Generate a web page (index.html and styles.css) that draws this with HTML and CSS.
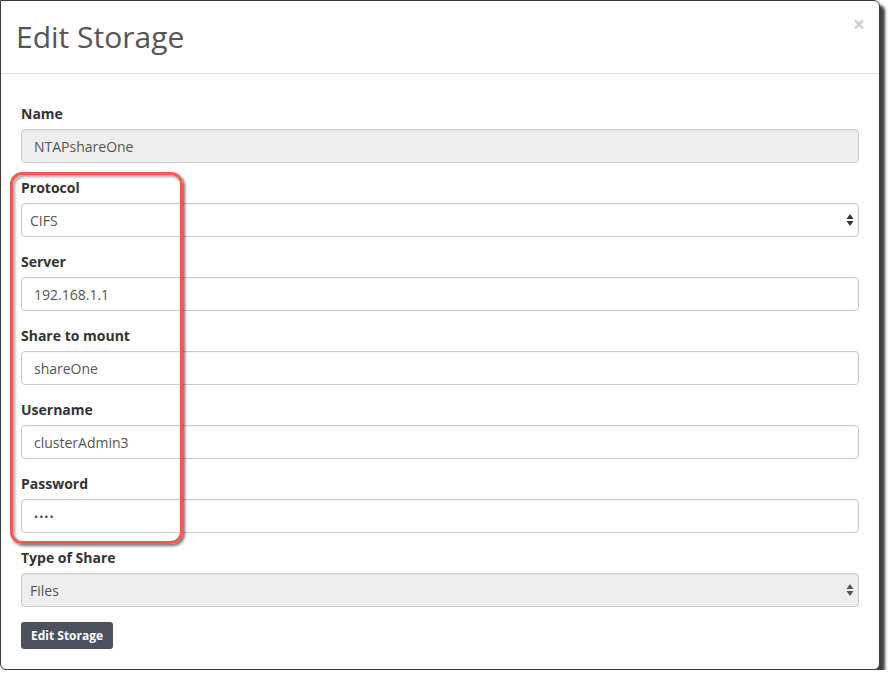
FILE: index.html
```html
<!DOCTYPE html>
<html lang="en">
<head>
    <meta charset="UTF-8">
    <meta name="viewport" content="width=device-width, initial-scale=1.0">
    <title>Edit Storage</title>
    <link rel="stylesheet" href="styles.css">
</head>
<body>
    <div class="modal">
        <div class="modal-header">
            <button class="close" type="button">&times;</button>
            <h4 class="modal-title">Edit Storage</h4>
        </div>
        <div class="modal-body">
            <form>
                <div class="form-group">
                    <label for="name">Name</label>
                    <input class="form-control" type="text" id="name" value="NTAPshareOne" disabled>
                </div>
                <div class="form-group">
                    <label for="protocol">Protocol</label>
                    <div class="select-wrap">
                        <select class="form-control" id="protocol">
                            <option>CIFS</option>
                            <option>NFS</option>
                        </select>
                        <svg class="arrows" width="8" height="14" viewBox="0 0 8 14"><path d="M4 1 L7.5 6 H0.5 Z M4 13 L7.5 8 H0.5 Z" fill="#333"/></svg>
                    </div>
                </div>
                <div class="form-group">
                    <label for="server">Server</label>
                    <input class="form-control" type="text" id="server" value="192.168.1.1">
                </div>
                <div class="form-group">
                    <label for="share">Share to mount</label>
                    <input class="form-control" type="text" id="share" value="shareOne">
                </div>
                <div class="form-group">
                    <label for="username">Username</label>
                    <input class="form-control" type="text" id="username" value="clusterAdmin3">
                </div>
                <div class="form-group">
                    <label for="password">Password</label>
                    <input class="form-control password" type="text" id="password" value="••••">
                </div>
                <div class="form-group">
                    <label for="shareType">Type of Share</label>
                    <div class="select-wrap">
                        <select class="form-control" id="shareType" disabled>
                            <option>Files</option>
                        </select>
                        <svg class="arrows" width="8" height="14" viewBox="0 0 8 14"><path d="M4 1 L7.5 6 H0.5 Z M4 13 L7.5 8 H0.5 Z" fill="#555"/></svg>
                    </div>
                </div>
                <button class="btn" type="button">Edit Storage</button>
            </form>
        </div>
        <div class="highlight"></div>
    </div>
</body>
</html>
```

FILE: styles.css
```css
* {
    box-sizing: border-box;
}
body {
    margin: 0;
    background-color: #ffffff;
    font-family: 'Open Sans', sans-serif;
    font-size: 14px;
    color: #333333;
}
.modal {
    position: relative;
    width: 880px;
    background-color: #ffffff;
    border: 1px solid #3a3a3a;
    border-radius: 0 6px 6px 6px;
    box-shadow: 5px 5px 3px rgba(0, 0, 0, 0.75);
}
.modal-header {
    padding: 15px;
    border-bottom: 1px solid #e5e5e5;
}
.modal-title {
    margin: 0;
    font-size: 30px;
    font-weight: 400;
    line-height: 42px;
    color: #555555;
}
.close {
    float: right;
    margin-top: -2px;
    margin-right: -1px;
    padding: 0;
    border: none;
    background: none;
    font-family: 'Open Sans', sans-serif;
    font-size: 21px;
    font-weight: 700;
    line-height: 1;
    color: #000000;
    opacity: 0.2;
    cursor: pointer;
}
.modal-body {
    padding: 30px 20px 20px 20px;
}
.form-group {
    margin-bottom: 15px;
}
label {
    display: block;
    margin-bottom: 5px;
    font-weight: 700;
    line-height: 20px;
    color: #333333;
}
.form-control {
    display: block;
    width: 100%;
    height: 34px;
    padding: 6px 12px;
    border: 1px solid #cccccc;
    border-radius: 4px;
    background-color: #ffffff;
    font-family: 'Open Sans', sans-serif;
    font-size: 14px;
    color: #555555;
    box-shadow: inset 0 1px 1px rgba(0, 0, 0, 0.05);
}
.form-control[disabled] {
    background-color: #eeeeee;
    opacity: 1;
}
.password {
    font-size: 11px;
    letter-spacing: 1px;
    color: #444444;
}
.select-wrap {
    position: relative;
}
select.form-control {
    padding-left: 8px;
    appearance: none;
    -webkit-appearance: none;
}
.arrows {
    position: absolute;
    right: 5px;
    top: 10px;
    pointer-events: none;
}
.btn {
    display: block;
    height: 27px;
    padding: 0 10px;
    border: none;
    border-radius: 3px;
    background-color: #4b525c;
    font-family: 'Open Sans', sans-serif;
    font-size: 12px;
    font-weight: 700;
    color: #ffffff;
    cursor: pointer;
}
.highlight {
    position: absolute;
    left: 9px;
    top: 171px;
    width: 173px;
    height: 372px;
    border: 3px solid #f45a4d;
    border-radius: 12px;
    box-shadow: 2px 2px 3px rgba(0, 0, 0, 0.55), inset 2px 2px 3px rgba(0, 0, 0, 0.35);
    pointer-events: none;
}
```
